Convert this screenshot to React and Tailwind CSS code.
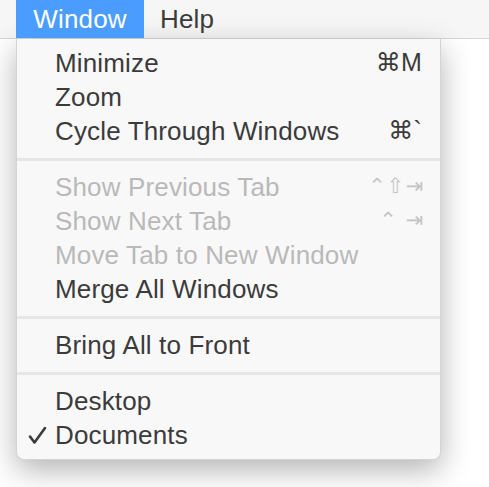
import React from 'react';

const font = { fontFamily: '"Liberation Sans", Arial, "DejaVu Sans", sans-serif' };

const sections = [
    [
        { label: 'Minimize', key: '⌘M' },
        { label: 'Zoom' },
        { label: 'Cycle Through Windows', key: '⌘`' },
    ],
    [
        { label: 'Show Previous Tab', key: '⌃⇧⇥', disabled: true },
        { label: 'Show Next Tab', key: '⌃ ⇥', disabled: true },
        { label: 'Move Tab to New Window', disabled: true },
        { label: 'Merge All Windows' },
    ],
    [{ label: 'Bring All to Front' }],
    [{ label: 'Desktop' }, { label: 'Documents', checked: true }],
];

const Check = () => (
    <svg className="absolute left-[11px] top-[8px]" width="19" height="19" viewBox="0 0 19 19">
        <path d="M2 10.5 L6.5 16.5 L17 2" fill="none" stroke="#3b3b3b" strokeWidth="2.6" strokeLinecap="round" strokeLinejoin="round" />
    </svg>
);

const MenuRow = ({ item }) => (
    <div
        className={`h-[34px] flex items-center justify-between pl-[38px] pr-[16px] relative ${
            item.disabled ? 'text-[#b9b9b9]' : 'text-[#3b3b3b]'
        }`}
    >
        {item.checked && <Check />}
        <span>{item.label}</span>
        {item.key && (
            <span
                className={item.disabled ? 'text-[#c4c4c4] text-[21px] tracking-[1px]' : 'text-[25px] pr-[2px]'}
                style={item.disabled ? { fontFamily: '"DejaVu Sans", sans-serif' } : undefined}
            >
                {item.key}
            </span>
        )}
    </div>
);

const App = () => {
    return (
        <div className="w-[489px] h-[487px] bg-white overflow-hidden text-[26px] tracking-[0.15px]" style={font}>
            <div className="h-[39px] bg-[#f6f6f6] border-b border-[#d6d6d6] flex items-stretch pl-4">
                <div className="w-[128px] bg-[#4b9cff] text-white flex items-center justify-center">Window</div>
                <div className="flex items-center pl-[16px] text-[#3b3b3b]">Help</div>
            </div>
            <div className="w-[425px] ml-4 bg-[#f8f8f8] rounded-b-lg pt-[7px] pb-[7px] shadow-[0_10px_30px_rgba(0,0,0,0.3)] border-x border-b border-[#d4d4d4]">
                {sections.map((sec, i) => (
                    <div key={i}>
                        {i > 0 && (
                            <div className="h-[22px] flex items-center">
                                <div className="h-[3px] w-full bg-[#e6e6e6]" />
                            </div>
                        )}
                        {sec.map((item) => (
                            <MenuRow key={item.label} item={item} />
                        ))}
                    </div>
                ))}
            </div>
        </div>
    );
};

export default App;
